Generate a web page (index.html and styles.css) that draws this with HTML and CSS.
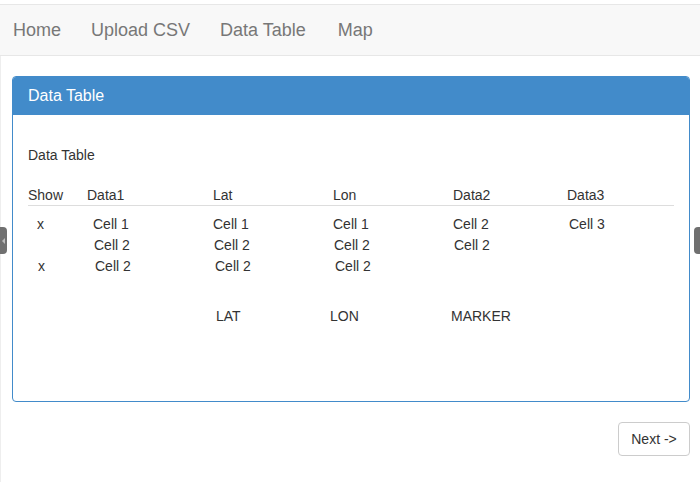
FILE: index.html
```html
<!DOCTYPE html>
<html>
<head>
<meta charset="utf-8">
<link rel="stylesheet" href="styles.css">
</head>
<body>
<nav class="navbar">
  <a class="nav-link" href="#">Home</a>
  <a class="nav-link" href="#">Upload CSV</a>
  <a class="nav-link" href="#">Data Table</a>
  <a class="nav-link" href="#">Map</a>
</nav>
<main class="main">
  <section class="panel">
    <div class="panel-heading">Data Table</div>
    <div class="panel-body">
      <p class="subtitle">Data Table</p>
      <div class="table">
        <div class="thead">
          <span>Show</span><span>Data1</span><span>Lat</span><span>Lon</span><span>Data2</span><span>Data3</span>
        </div>
        <div class="row">
          <span class="i9">x</span><span class="i6">Cell 1</span><span>Cell 1</span><span>Cell 1</span><span>Cell 2</span><span class="i2">Cell 3</span>
        </div>
        <div class="row">
          <span></span><span class="i7">Cell 2</span><span class="i1">Cell 2</span><span class="i1">Cell 2</span><span class="i1">Cell 2</span><span></span>
        </div>
        <div class="row">
          <span class="i10">x</span><span class="i8">Cell 2</span><span class="i2">Cell 2</span><span class="i2">Cell 2</span><span></span><span></span>
        </div>
      </div>
      <div class="map-legend">
        <span class="lat">LAT</span><span class="lon">LON</span><span class="marker">MARKER</span>
      </div>
    </div>
  </section>
  <div class="actions">
    <button class="btn">Next -&gt;</button>
  </div>
</main>
<div class="handle handle-left"></div>
<div class="handle handle-right"></div>
</body>
</html>
```
FILE: styles.css
```css
html, body {
  margin: 0;
  padding: 0;
  background: #fff;
  font-family: "Liberation Sans", Arial, sans-serif;
  font-size: 14px;
  line-height: 20px;
  color: #333;
}
.navbar {
  margin-top: 4px;
  height: 50px;
  background: #f8f8f8;
  border-top: 1px solid #e7e7e7;
  border-bottom: 1px solid #e7e7e7;
  display: flex;
  align-items: center;
  gap: 30px;
  padding-left: 13px;
}
.nav-link {
  color: #777;
  font-size: 18px;
  text-decoration: none;
  line-height: 20px;
}
.nav-link:last-child {
  margin-left: 2px;
}
.main {
  border-left: 1px solid #eeeeee;
  padding: 20px 10px 30px 11px;
  min-height: 380px;
}
.panel {
  border: 1px solid #428bca;
  border-radius: 4px;
  background: #fff;
}
.panel-heading {
  background: #428bca;
  color: #fff;
  font-size: 16px;
  height: 38px;
  line-height: 38px;
  padding-left: 15px;
  border-radius: 3px 3px 0 0;
}
.panel-body {
  padding: 30px 15px 15px 15px;
}
.subtitle {
  margin: 0 0 20px 0;
}
.table {
  display: flex;
  flex-direction: column;
}
.thead, .row {
  display: grid;
  grid-template-columns: 59px 126px 120px 120px 114px 107px;
}
.thead {
  border-bottom: 1px solid #ddd;
  height: 20px;
  margin-bottom: 8px;
}
.row {
  height: 21px;
}
.i1 { padding-left: 1px; }
.i2 { padding-left: 2px; }
.i6 { padding-left: 6px; }
.i7 { padding-left: 7px; }
.i8 { padding-left: 8px; }
.i9 { padding-left: 9px; }
.i10 { padding-left: 10px; }
.map-legend {
  display: flex;
  margin-top: 29px;
  height: 80px;
  padding-left: 188px;
}
.lat { width: 114px; }
.lon { width: 121px; }
.actions {
  display: flex;
  justify-content: flex-end;
  margin-top: 20px;
}
.btn {
  font-family: "Liberation Sans", Arial, sans-serif;
  font-size: 14px;
  color: #333;
  background: #fff;
  border: 1px solid #ccc;
  border-radius: 4px;
  height: 34px;
  width: 72px;
  padding: 0;
}
.handle {
  position: absolute;
  top: 227px;
  height: 27px;
  width: 7px;
  background: #707070;
}
.handle-left {
  left: 0;
  border-radius: 0 4px 4px 0;
}
.handle-left::after {
  content: "";
  position: absolute;
  left: 2px;
  top: 11px;
  border-right: 3px solid #bbb;
  border-top: 3px solid transparent;
  border-bottom: 3px solid transparent;
}
.handle-right {
  left: 694px;
  width: 6px;
  border-radius: 4px 0 0 4px;
}
```
